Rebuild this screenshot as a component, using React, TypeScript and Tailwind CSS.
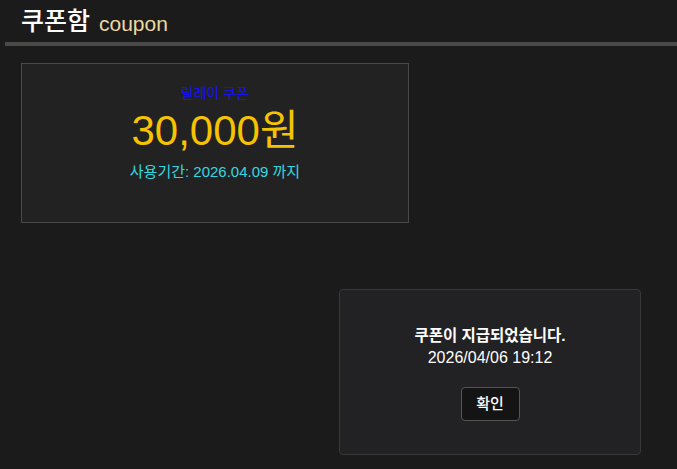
import React from 'react';

const font = { fontFamily: '"Liberation Sans", "Noto Sans CJK KR", sans-serif' };

export default function App() {
  return (
    <div className="w-[677px] h-[469px] bg-[#1c1b1b] overflow-hidden" style={font}>
      {/* Header */}
      <header className="pl-[21px] h-[42px] flex items-end pb-[8px]">
        <h1 className="text-[25px] font-medium text-white leading-none">쿠폰함</h1>
        <span className="ml-[9px] text-[21px] text-[#ecd9a0] leading-none">coupon</span>
      </header>
      <div className="ml-[5px] h-[4px] bg-[#4a4a4a]" />

      {/* Coupon card */}
      <div className="ml-[21px] mt-[17px] w-[388px] h-[160px] border border-[#4a4949] bg-[#232223] flex flex-col items-center pt-[20px]">
        <div className="text-[14px] leading-[18px] text-[#1414ee]">릴레이 쿠폰</div>
        <div className="text-[42px] leading-[48px] text-[#f5c300] mt-[5px]">30,000원</div>
        <div className="text-[15px] leading-[18px] text-[#30d8e0] mt-[8px]">사용기간: 2026.04.09 까지</div>
      </div>

      {/* Notice dialog */}
      <div className="ml-[339px] mt-[66px] w-[302px] h-[166px] rounded-[4px] border border-[#3a393a] bg-[#222123] flex flex-col items-center pt-[35px]">
        <div className="text-[15.5px] leading-[22px] font-bold text-white">쿠폰이 지급되었습니다.</div>
        <div className="text-[16px] leading-[22px] text-white">2026/04/06 19:12</div>
        <button className="mt-[18px] w-[59px] h-[34px] rounded-[4px] border border-[#555] bg-[#141414] text-white text-[15px] font-medium">확인</button>
      </div>
    </div>
  );
}
